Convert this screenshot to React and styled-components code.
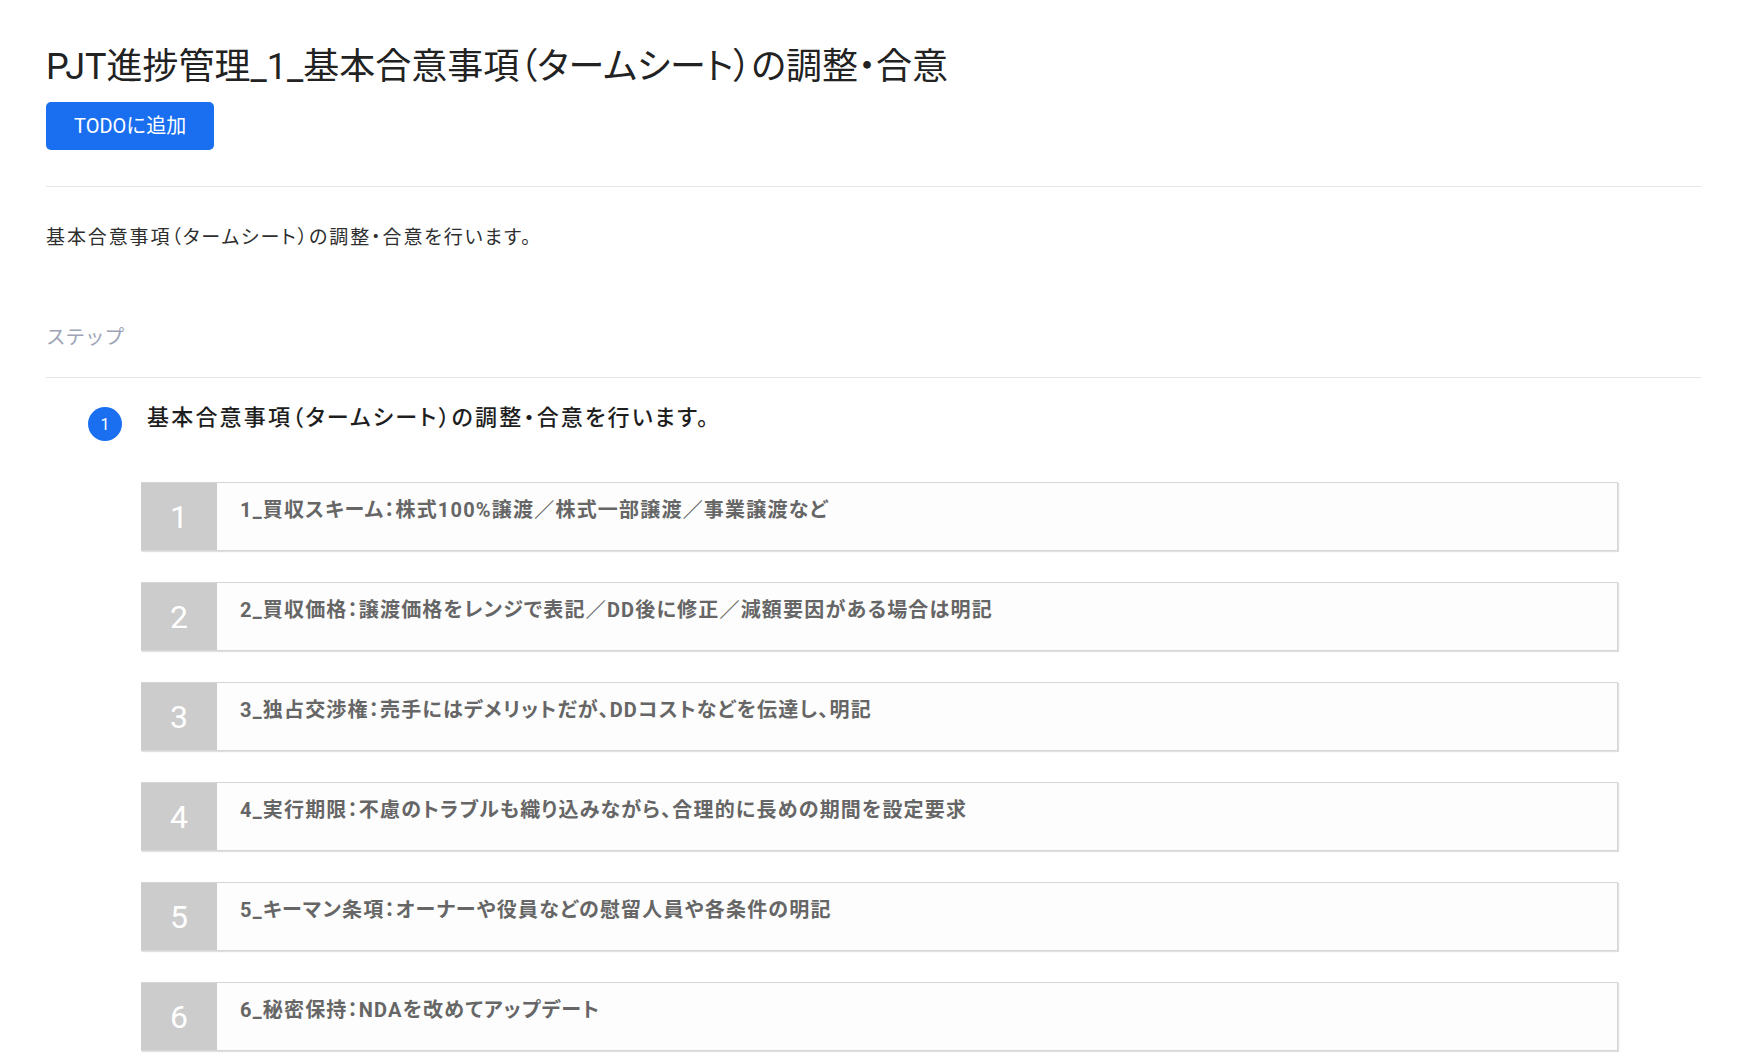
import React from "react";
import styled, { createGlobalStyle } from "styled-components";

const Global = createGlobalStyle`
  html, body { margin: 0; padding: 0; background: #ffffff; }
  body {
    font-family: Roboto, "Noto Sans CJK JP", "Noto Sans", sans-serif;
    color: #222;
  }
  * { box-sizing: border-box; }
`;

const Page = styled.main`
  padding: 46px 52px 40px 46px;
`;

const Title = styled.h1`
  margin: 0;
  font-size: 36px;
  line-height: 43px;
  font-weight: 400;
  color: #222;
  font-feature-settings: "palt";
`;

const Button = styled.button`
  margin-top: 13px;
  display: inline-block;
  background: #1a6ff0;
  color: #fff;
  border: none;
  border-radius: 5px;
  font-family: inherit;
  font-size: 20px;
  line-height: 30px;
  padding: 9px 28px;
  cursor: pointer;
`;

const Divider = styled.hr`
  margin: ${(p) => p.$mt}px 0 0;
  border: none;
  border-top: 1px solid #e6e6e6;
  height: 0;
`;

const Description = styled.p`
  margin: 37px 0 0;
  font-size: 19px;
  line-height: 28px;
  color: #2e2e2e;
  font-feature-settings: "palt";
  letter-spacing: 1.9px;
`;

const SectionLabel = styled.h2`
  margin: 72px 0 0;
  font-size: 19.5px;
  line-height: 28px;
  font-weight: 400;
  color: #9ca3b4;
`;

const StepRow = styled.div`
  margin: 24px 0 0 42px;
  display: flex;
  align-items: flex-start;
  gap: 25px;
`;

const StepBadge = styled.span`
  margin-top: 5px;
  flex: none;
  width: 34px;
  height: 34px;
  border-radius: 50%;
  background: #1a6ff0;
  color: #fff;
  font-size: 16px;
  display: flex;
  align-items: center;
  justify-content: center;
`;

const StepTitle = styled.h3`
  margin: 0;
  font-size: 22px;
  line-height: 32px;
  font-weight: 500;
  color: #1e1e1e;
  font-feature-settings: "palt";
  letter-spacing: 2.2px;
`;

const ItemList = styled.ol`
  list-style: none;
  margin: 41px 83px 0 95px;
  padding: 0;
  display: flex;
  flex-direction: column;
  gap: 31px;
`;

const Item = styled.li`
  display: flex;
  height: 69px;
  border: 1px solid #d6d6d6;
  border-left: none;
  background: #fdfdfd;
  box-shadow: 1px 1px 1px rgba(0, 0, 0, 0.12);
`;

const ItemNumber = styled.span`
  flex: none;
  width: 76px;
  background: #cccccc;
  color: #fff;
  font-size: 32px;
  display: flex;
  align-items: center;
  justify-content: center;
`;

const ItemText = styled.span`
  padding: 12px 0 0 23px;
  font-size: 20px;
  line-height: 30px;
  font-weight: 700;
  color: #666;
  font-feature-settings: "palt";
  letter-spacing: 1.2px;
`;

const items = [
  "1_買収スキーム：株式100%譲渡／株式一部譲渡／事業譲渡など",
  "2_買収価格：譲渡価格をレンジで表記／DD後に修正／減額要因がある場合は明記",
  "3_独占交渉権：売手にはデメリットだが、DDコストなどを伝達し、明記",
  "4_実行期限：不慮のトラブルも織り込みながら、合理的に長めの期間を設定要求",
  "5_キーマン条項：オーナーや役員などの慰留人員や各条件の明記",
  "6_秘密保持：NDAを改めてアップデート",
];

export default function App() {
  return (
    <>
      <Global />
      <Page>
        <Title>PJT進捗管理_1_基本合意事項（タームシート）の調整・合意</Title>
        <Button>TODOに追加</Button>
        <Divider $mt={36} />
        <Description>基本合意事項（タームシート）の調整・合意を行います。</Description>
        <SectionLabel>ステップ</SectionLabel>
        <Divider $mt={25} />
        <StepRow>
          <StepBadge>1</StepBadge>
          <StepTitle>基本合意事項（タームシート）の調整・合意を行います。</StepTitle>
        </StepRow>
        <ItemList>
          {items.map((t, i) => (
            <Item key={i}>
              <ItemNumber>{i + 1}</ItemNumber>
              <ItemText>{t}</ItemText>
            </Item>
          ))}
        </ItemList>
      </Page>
    </>
  );
}
